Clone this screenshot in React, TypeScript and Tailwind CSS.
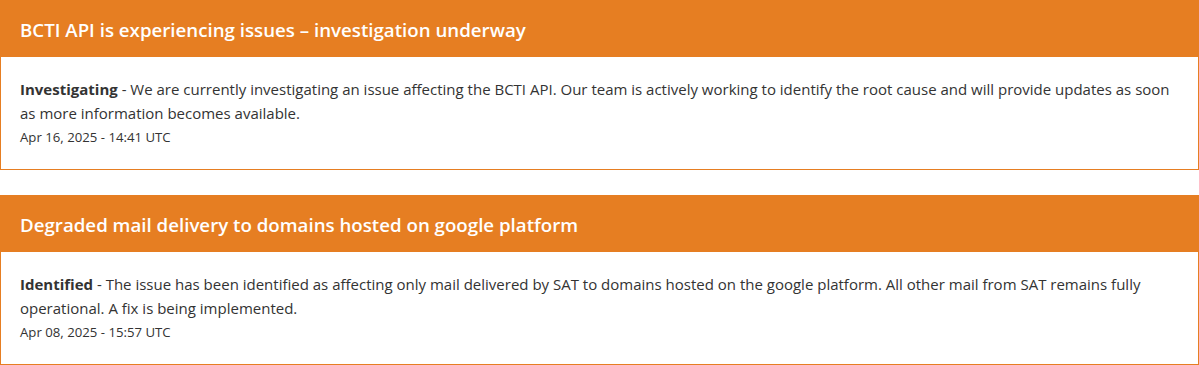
import React from "react";

const incidents = [
  {
    title: "BCTI API is experiencing issues – investigation underway",
    status: "Investigating",
    body: "We are currently investigating an issue affecting the BCTI API. Our team is actively working to identify the root cause and will provide updates as soon as more information becomes available.",
    date: "Apr 16, 2025 - 14:41 UTC",
  },
  {
    title: "Degraded mail delivery to domains hosted on google platform",
    status: "Identified",
    body: "The issue has been identified as affecting only mail delivered by SAT to domains hosted on the google platform. All other mail from SAT remains fully operational. A fix is being implemented.",
    date: "Apr 08, 2025 - 15:57 UTC",
  },
];

export default function App() {
  return (
    <div className="w-[1199px] bg-white flex flex-col gap-[25px]" style={{ fontFamily: "'Open Sans', sans-serif" }}>
      {incidents.map((i) => (
        <div key={i.title}>
          <div className="bg-[#e67e22] h-[57px] pl-[20px] pt-[3px] flex items-center">
            <h2 className="text-white text-[18.7px] font-semibold">{i.title}</h2>
          </div>
          <div className="border-x border-b border-[#e67e22] px-[19px] pt-[20px] pb-[20px] text-[#333]">
            <p className="text-[15px] leading-[24px]">
              <strong className="font-bold">{i.status}</strong> - {i.body}
            </p>
            <p className="text-[13.2px] leading-[24px]">{i.date}</p>
          </div>
        </div>
      ))}
    </div>
  );
}
